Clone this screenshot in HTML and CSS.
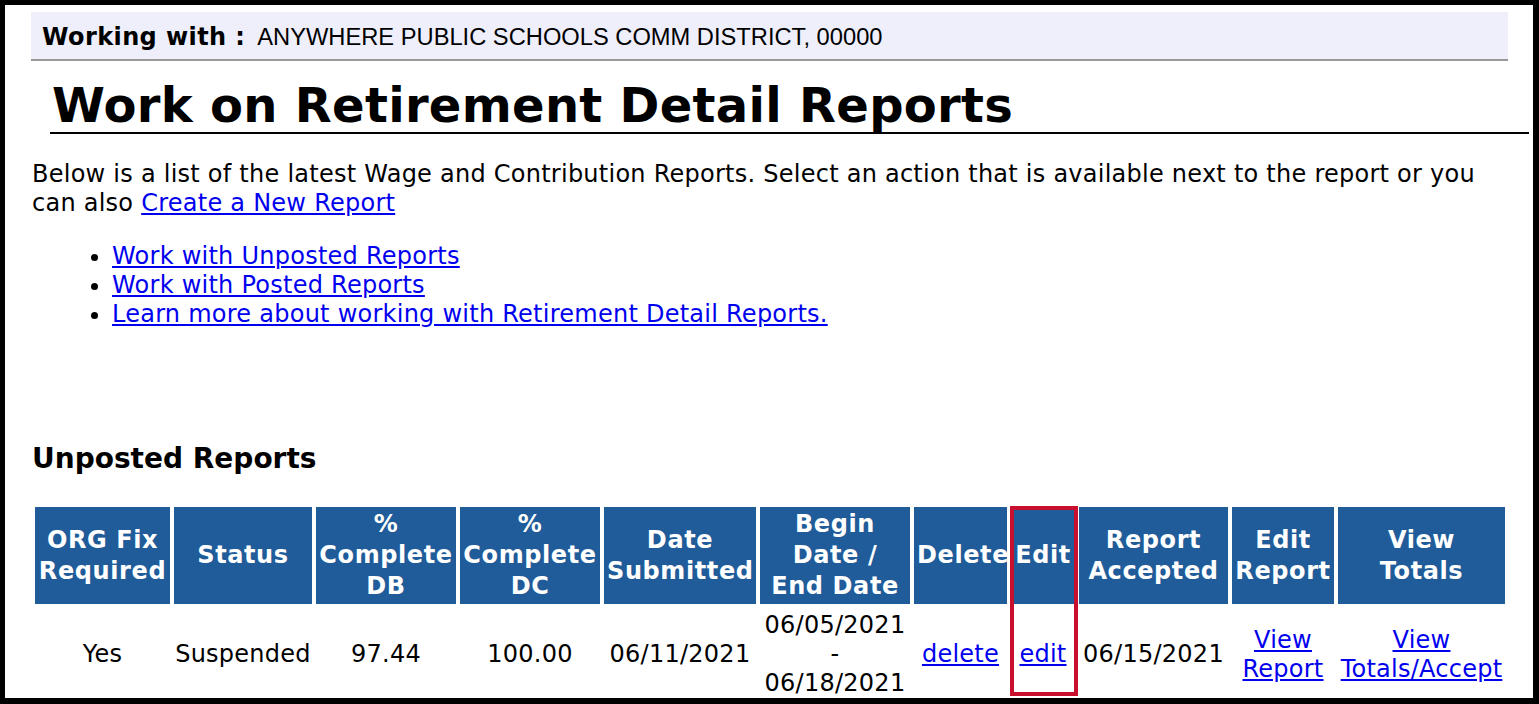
FILE: index.html
```html
<!DOCTYPE html>
<html lang="en">
<head>
  <meta charset="UTF-8">
  <title>Work on Retirement Detail Reports</title>
  <link rel="stylesheet" href="styles.css">
</head>
<body>
  <div class="frame">
    <div class="working-bar">
      <span class="working-label">Working with :</span>
      <span class="working-org">ANYWHERE PUBLIC SCHOOLS COMM DISTRICT, 00000</span>
    </div>

    <h1 class="page-title">Work on Retirement Detail Reports</h1>

    <p class="intro">Below is a list of the latest Wage and Contribution Reports. Select an action that is available next to the report or you can also <a href="#">Create a New Report</a></p>

    <ul class="quick-links">
      <li><a href="#">Work with Unposted Reports</a></li>
      <li><a href="#">Work with Posted Reports</a></li>
      <li><a href="#">Learn more about working with Retirement Detail Reports.</a></li>
    </ul>

    <h2 class="section-title">Unposted Reports</h2>

    <table class="reports">
      <colgroup>
        <col class="c-org">
        <col class="c-status">
        <col class="c-db">
        <col class="c-dc">
        <col class="c-submitted">
        <col class="c-range">
        <col class="c-delete">
        <col class="c-edit">
        <col class="c-accepted">
        <col class="c-editreport">
        <col class="c-totals">
      </colgroup>
      <thead>
        <tr>
          <th>ORG Fix Required</th>
          <th>Status</th>
          <th>% Complete DB</th>
          <th>% Complete DC</th>
          <th>Date Submitted</th>
          <th>Begin Date / End Date</th>
          <th>Delete</th>
          <th class="highlight">Edit</th>
          <th>Report Accepted</th>
          <th>Edit Report</th>
          <th>View<br>Totals</th>
        </tr>
      </thead>
      <tbody>
        <tr>
          <td>Yes</td>
          <td>Suspended</td>
          <td>97.44</td>
          <td>100.00</td>
          <td>06/11/2021</td>
          <td>06/05/2021<br>-<br>06/18/2021</td>
          <td><a href="#">delete</a></td>
          <td><a href="#">edit</a></td>
          <td>06/15/2021</td>
          <td><a href="#">View Report</a></td>
          <td><a href="#">View Totals/Accept</a></td>
        </tr>
      </tbody>
    </table>
  </div>
</body>
</html>
```

FILE: styles.css
```css
* {
  margin: 0;
  padding: 0;
  box-sizing: border-box;
}

body {
  font-family: 'DejaVu Sans', Verdana, sans-serif;
  font-size: 24px;
  line-height: 29px;
  letter-spacing: 0.25px;
  color: #000000;
  background: #ffffff;
}

a {
  color: #0000ee;
  text-decoration: underline;
}

.frame {
  width: 1539px;
  height: 704px;
  border-style: solid;
  border-color: #000000;
  border-width: 5px 6px 6px 5px;
  padding: 7px 25px 0 26px;
  overflow: hidden;
}

/* Working with bar */
.working-bar {
  height: 49px;
  background: #efeffc;
  border-bottom: 2px solid #999999;
  padding: 3px 11px 0;
  display: flex;
  align-items: center;
  gap: 12px;
}

.working-label {
  font-weight: bold;
  font-size: 24px;
  letter-spacing: 0.4px;
}

.working-org {
  font-family: 'Liberation Sans', Arial, sans-serif;
  font-size: 23.7px;
  letter-spacing: 0;
}

.page-title {
  font-size: 48px;
  line-height: 54px;
  font-weight: bold;
  letter-spacing: 0.3px;
  margin: 17px -21px 0 19px;
  padding-left: 2px;
  border-bottom: 2px solid #000000;
}

.intro {
  margin-top: 26px;
  padding-left: 1px;
}

.quick-links {
  margin-top: 24px;
  padding-left: 81px;
}

.section-title {
  font-size: 28px;
  line-height: 34px;
  font-weight: bold;
  letter-spacing: 0;
  margin-top: 113px;
  padding-left: 1px;
}

/* Reports table */
.reports {
  margin-top: 28px;
  table-layout: fixed;
  border-collapse: separate;
  border-spacing: 4px 3px;
  width: 1478px;
}

.c-org { width: 135px; }
.c-status { width: 138px; }
.c-db { width: 140px; }
.c-dc { width: 140px; }
.c-submitted { width: 152px; }
.c-range { width: 150px; }
.c-delete { width: 93px; }
.c-edit { width: 64px; }
.c-accepted { width: 149px; }
.c-editreport { width: 102px; }
.c-totals { width: 167px; }

.reports th {
  background: #1f5c99;
  color: #ffffff;
  font-weight: bold;
  line-height: 31px;
  letter-spacing: 0.6px;
  padding: 2px 3px;
  text-align: center;
  vertical-align: middle;
}

.reports td {
  text-align: center;
  vertical-align: middle;
  padding: 4px 0;
  white-space: nowrap;
}

.reports td:nth-child(10),
.reports td:nth-child(11) {
  white-space: normal;
}

/* red callout around the Edit column */
.reports th.highlight {
  position: relative;
}

.reports th.highlight::after {
  content: '';
  position: absolute;
  top: -1px;
  left: -1px;
  right: -3px;
  height: 182px;
  border: 4px solid #c8102e;
}
```
